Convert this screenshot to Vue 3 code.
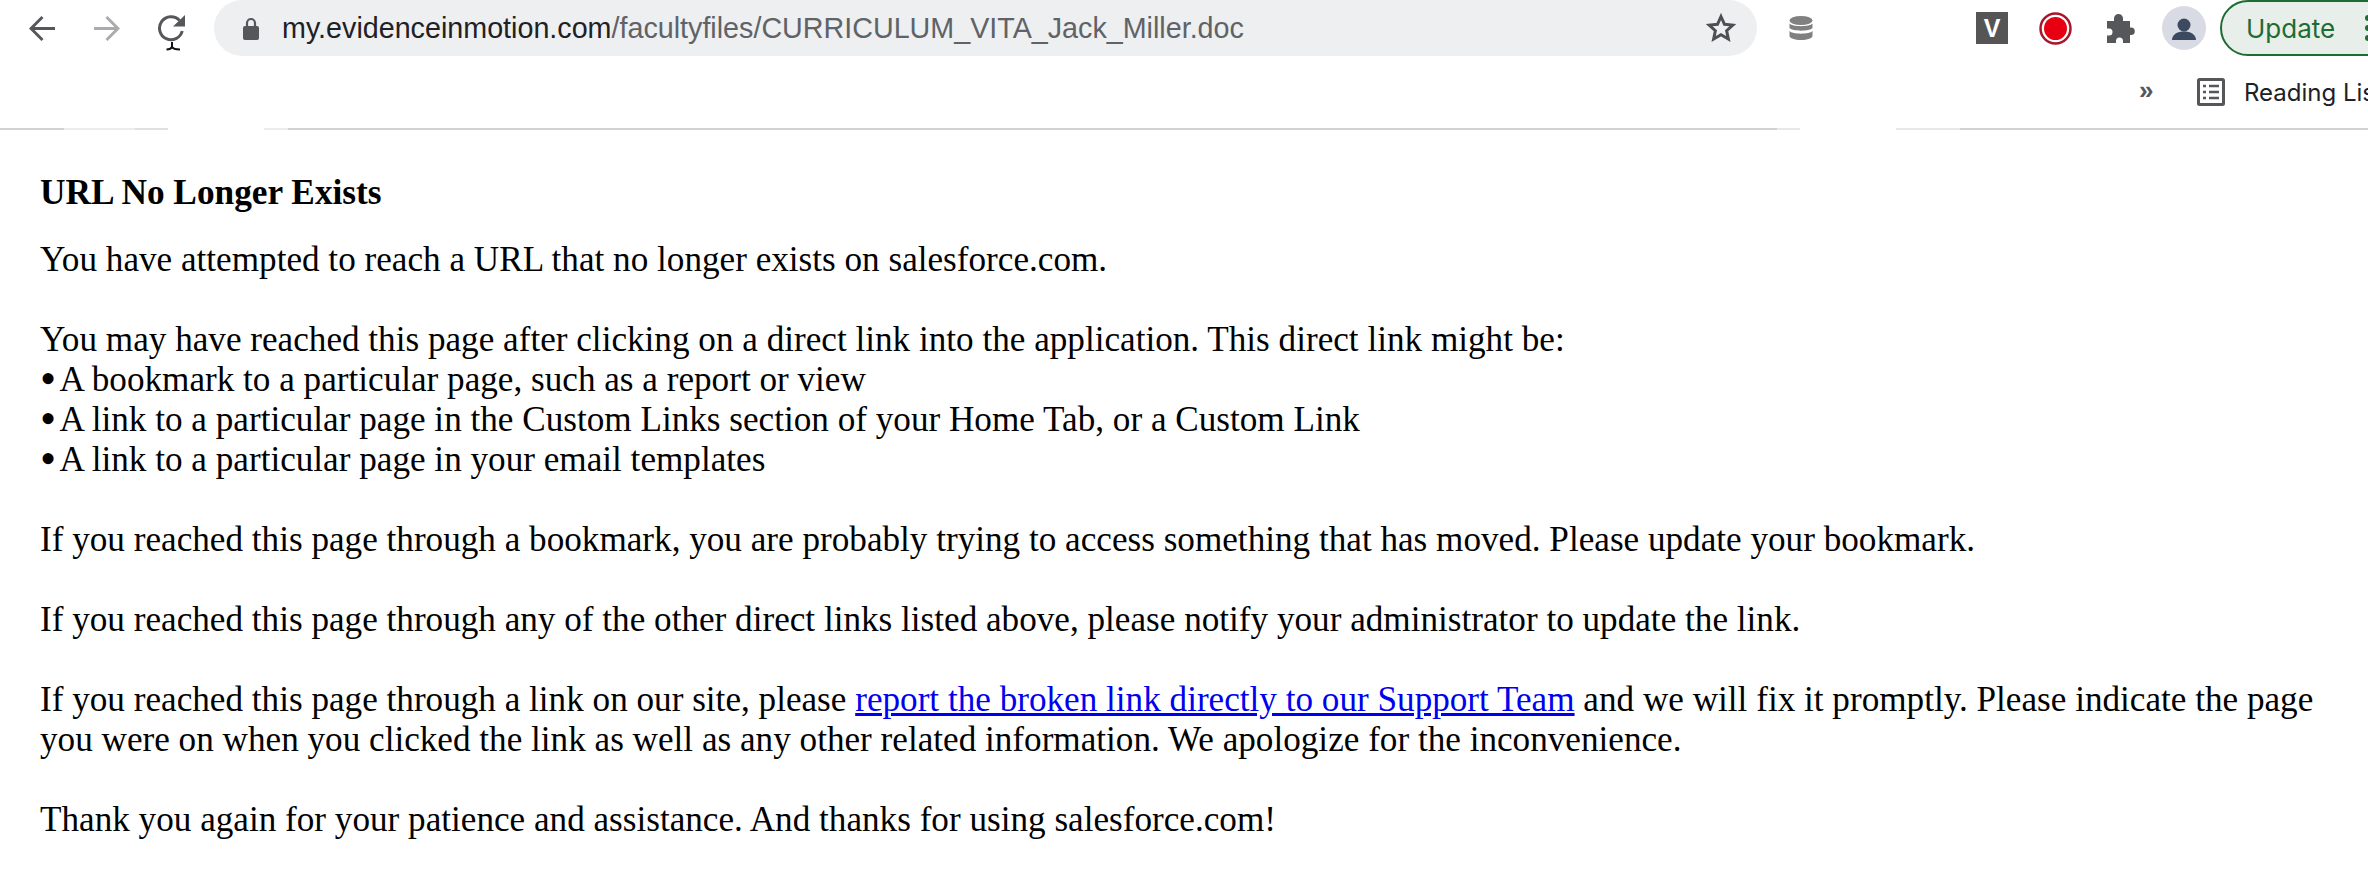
<script setup>
const bullets = [
  'A bookmark to a particular page, such as a report or view',
  'A link to a particular page in the Custom Links section of your Home Tab, or a Custom Link',
  'A link to a particular page in your email templates',
]
</script>

<template>
  <div class="window">
    <header class="chrome">
      <div class="toolbar">
        <button class="nav back" aria-label="Back">
          <svg width="27" height="27" viewBox="0 0 27 27"><path d="M26 13.500H3M13.500 2 2 13.500 13.500 25" fill="none" stroke="#55575b" stroke-width="3"/></svg>
        </button>
        <button class="nav forward" aria-label="Forward">
          <svg width="27" height="27" viewBox="0 0 27 27"><path d="M1 13.500h23M13.500 2 25 13.500 13.500 25" fill="none" stroke="#a9abae" stroke-width="3"/></svg>
        </button>
        <button class="nav reload" aria-label="Reload">
          <svg width="30" height="38" viewBox="0 0 30 38">
            <path d="M22.500 6.500A11.500 11.500 0 1 0 25.200 17" fill="none" stroke="#55575b" stroke-width="3"/>
            <path d="M28 1v11.500H16z" fill="#55575b"/>
            <path d="M15 28v6M9.500 35.500c3 0 4.500-.5 5.500-2.500 1 2 2.500 2.500 8 2.500" fill="none" stroke="#111" stroke-width="2"/>
          </svg>
        </button>
        <div class="omnibox">
          <svg class="lock" width="18" height="23" viewBox="0 0 18 23">
            <path d="M5 10V6a4 4 0 0 1 8 0v4" fill="none" stroke="#55575b" stroke-width="2.200"/>
            <rect x="1" y="9" width="16" height="14" rx="2" fill="#55575b"/>
          </svg>
          <span class="url"><span class="host">my.evidenceinmotion.com</span>/facultyfiles/CURRICULUM_VITA_Jack_Miller.doc</span>
          <svg class="star" width="30" height="30" viewBox="0 0 24 24"><path d="m12 2.800 2.800 6.200 6.700.7-5 4.500 1.400 6.600L12 17.400l-5.900 3.400 1.400-6.600-5-4.500 6.700-.7z" fill="none" stroke="#4d4f53" stroke-width="2.400"/></svg>
        </div>
        <svg class="db" width="24" height="24" viewBox="0 0 24 24" fill="#808080">
          <ellipse cx="12" cy="4.500" rx="11.500" ry="4.500"/>
          <path d="M.5 7.500c2.500 3.500 20.500 3.500 23 0v4.500c-2.500 3.500-20.500 3.500-23 0zM.5 15c2.500 3.500 20.500 3.500 23 0v5c0 2-5 4-11.500 4S.5 22 .5 20z"/>
        </svg>
        <div class="ext-v">V</div>
        <svg class="ext-rec" width="33" height="33" viewBox="0 0 33 33">
          <circle cx="16.500" cy="16.500" r="15" fill="#fff" stroke="#a8162a" stroke-width="2.500"/>
          <circle cx="16.500" cy="16.500" r="11.500" fill="#e60012"/>
        </svg>
        <svg class="ext-puzzle" width="29" height="29" viewBox="0 0 29 29"><path d="M1 7h7V4.500a4.500 4.500 0 0 1 9 0V7h7v6.500h1a3.800 3.800 0 0 1 0 7.600h-1V29h-7v-2a3.500 3.500 0 0 0-7 0v2H1v-7.500h2a3.500 3.500 0 0 0 0-7H1z" fill="#55575b"/></svg>
        <svg class="avatar" width="44" height="44" viewBox="0 0 44 44">
          <circle cx="22" cy="22" r="22" fill="#d8dbe3"/>
          <circle cx="22" cy="19" r="6.500" fill="#3c4a60"/>
          <path d="M10 34c0-6 6-8.500 12-8.500S34 28 34 34z" fill="#3c4a60"/>
        </svg>
        <div class="update">
          <span>Update</span>
          <span class="dots"><i></i><i></i><i></i></span>
        </div>
      </div>
      <div class="bookmarks">
        <span class="more">»</span>
        <span class="sep"></span>
        <svg class="list" width="28" height="28" viewBox="0 0 28 28">
          <rect x="1.500" y="1.500" width="25" height="25" rx="1" fill="none" stroke="#55575b" stroke-width="3"/>
          <path d="M6 8h3M12 8h10M6 14h3M12 14h10M6 20h3M12 20h10" stroke="#55575b" stroke-width="2.500"/>
        </svg>
        <span class="reading">Reading List</span>
      </div>
      <div class="rule"></div>
    </header>

    <main class="page">
      <h1>URL No Longer Exists</h1>
      <p>You have attempted to reach a URL that no longer exists on salesforce.com.</p>
      <p>
        You may have reached this page after clicking on a direct link into the application. This direct link might be:<br />
        <template v-for="b in bullets" :key="b"><span class="bullet">•</span>{{ b }}<br /></template>
      </p>
      <p>If you reached this page through a bookmark, you are probably trying to access something that has moved. Please update your bookmark.</p>
      <p>If you reached this page through any of the other direct links listed above, please notify your administrator to update the link.</p>
      <p>If you reached this page through a link on our site, please <a href="#">report the broken link directly to our Support Team</a> and we will fix it promptly. Please indicate the page you were on when you clicked the link as well as any other related information. We apologize for the inconvenience.</p>
      <p>Thank you again for your patience and assistance. And thanks for using salesforce.com!</p>
    </main>
  </div>
</template>

<style>
html, body { margin: 0; background: #fff; overflow: hidden; }
</style>

<style scoped>
.window { width: 2368px; height: 892px; overflow: hidden; background: #fff; }
.chrome { font-family: "Liberation Sans", Arial, sans-serif; overflow: hidden; }
.toolbar { height: 56px; display: flex; align-items: center; }
.nav { border: 0; background: none; padding: 0; display: flex; flex: none; }
.back { margin-left: 29px; }
.forward { margin-left: 37px; }
.reload { margin-left: 37px; margin-top: 10px; }
.omnibox { margin-left: 27px; width: 1543px; height: 56px; flex: none; background: #eeeff1; border-radius: 28px; box-sizing: border-box; padding: 0 21px 0 28px; display: flex; align-items: center; }
.lock { margin-right: 22px; flex: none; }
.url { flex: 1; font-size: 28.7px; color: #5f6368; white-space: nowrap; }
.host { color: #202124; }
.db { margin-left: 32px; flex: none; }
.ext-v { margin-left: 163px; width: 32px; height: 32px; flex: none; background: #555; color: #fff; font-size: 25px; font-weight: 700; display: flex; align-items: center; justify-content: center; }
.ext-rec { margin-left: 31px; flex: none; }
.ext-puzzle { margin-left: 34px; flex: none; }
.avatar { margin-left: 27px; flex: none; }
.update { margin-left: 14px; width: 180px; height: 56px; flex: none; box-sizing: border-box; border: 2px solid #1e6b34; border-radius: 28px; background: #e8efea; color: #1e6b34; font-family: Inter, "Liberation Sans", sans-serif; font-size: 26px; display: flex; align-items: center; padding-left: 24px; gap: 30px; }
.dots { display: flex; flex-direction: column; gap: 4px; }
.dots i { width: 6px; height: 6px; border-radius: 50%; background: #1e6b34; }
.bookmarks { height: 72px; display: flex; align-items: center; padding-left: 2139px; }
.more { font-size: 26px; font-weight: 700; color: #55575b; width: 14px; margin-bottom: 3px; }
.sep { width: 2px; height: 32px; background: #c8c8c8; margin-left: 21px; }
.list { margin-left: 23px; flex: none; }
.reading { margin-left: 19px; font-family: Inter, "Liberation Sans", sans-serif; font-size: 24px; color: #202124; white-space: nowrap; }
.rule { height: 2px; background: linear-gradient(to right, #d2d2d2 64px, #ececec 64px, #ececec 135px, #e0e0e0 135px, #e0e0e0 168px, #fff 168px, #fff 264px, #ececec 264px, #ececec 288px, #d2d2d2 288px, #d2d2d2 1777px, #e8e8e8 1777px, #e8e8e8 1800px, #fff 1800px, #fff 1896px, #e8e8e8 1896px, #e8e8e8 1960px, #d2d2d2 1960px); }
.page { padding: 43px 40px 0; box-sizing: border-box; width: 2368px; font-family: "Liberation Serif", "Times New Roman", serif; font-size: 35.16px; line-height: 40px; color: #000; }
h1 { margin: 0 0 27px; font-size: 35.3px; line-height: 40px; font-weight: 700; }
p { margin: 0 0 40px; }
a { color: #0000ee; text-decoration: underline; }
.bullet { display: inline-block; width: 19.5px; font-size: 46px; line-height: 0; vertical-align: -3px; }
</style>
